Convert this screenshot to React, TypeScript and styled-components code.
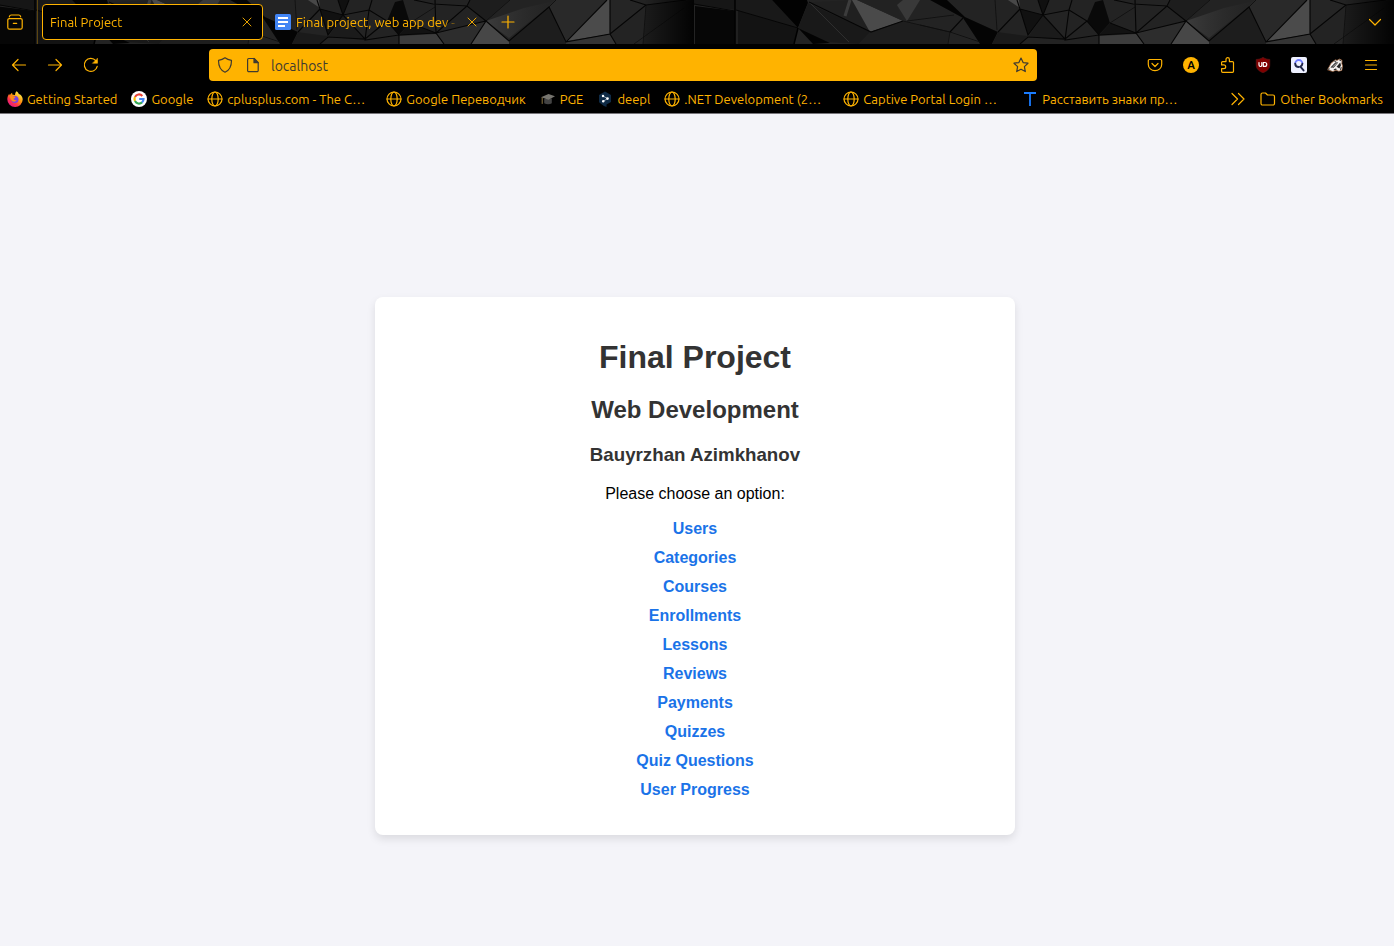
import React from 'react';
import styled, { createGlobalStyle, css } from 'styled-components';

const AMBER = '#ffb300';

const GlobalStyle = createGlobalStyle`
  *, *::before, *::after { box-sizing: border-box; }
  html, body { margin: 0; padding: 0; }
  body { background: #f4f4f9; font-family: Arial, "Liberation Sans", sans-serif; }
  button, input { font: inherit; color: inherit; margin: 0; padding: 0; border: 0; background: none; }
`;

const Chrome = styled.header`
  background: #000;
  color: ${AMBER};
  border-bottom: 1px solid #77757a;
  font-family: Ubuntu, "Noto Sans", sans-serif;
  font-size: 13px;
`;

/* Tab strip */
const TabStrip = styled.div`
  position: relative;
  height: 44px;
  display: flex;
  align-items: center;
  overflow: hidden;
`;

const ThemeArt = styled.svg`
  position: absolute;
  inset: 0;
  width: 100%;
  height: 44px;
`;

const StripContent = styled.div`
  position: relative;
  flex: 1;
  height: 100%;
  display: flex;
  align-items: center;
  padding: 0 3px 0 0;
`;

const ViewButton = styled.button`
  width: 38px;
  height: 44px;
  padding-left: 7px;
  display: flex;
  align-items: center;
  border-right: 1px solid #5c4510;
`;

const Tabs = styled.nav`
  display: flex;
  gap: 4px;
  padding-left: 4px;
`;

const Tab = styled.div<{ $active?: boolean }>`
  width: 221px;
  height: 36px;
  padding: 0 7px;
  display: flex;
  align-items: center;
  gap: 5px;
  border: 1px solid transparent;
  border-radius: 4px;
  ${p => p.$active && css`
    background: #000;
    border-color: ${AMBER};
  `}
`;

const TabTitle = styled.span`
  flex: 1;
  min-width: 0;
  overflow: hidden;
  white-space: nowrap;
  mask-image: linear-gradient(to left, transparent, #000 16px);
`;

const IconButton = styled.button<{ $size?: number }>`
  flex: none;
  width: ${p => p.$size ?? 36}px;
  height: ${p => Math.min(p.$size ?? 36, 36)}px;
  display: flex;
  align-items: center;
  justify-content: center;
`;

const Grow = styled.div`
  flex: 1;
`;

/* Navigation bar */
const NavBar = styled.div`
  height: 42px;
  display: flex;
  align-items: center;
  padding: 0 5px 0 1px;
`;

const Spring = styled.div`
  flex: 0 1 100px;
`;

const UrlBar = styled.form`
  flex: 1;
  min-width: 0;
  height: 32px;
  display: flex;
  align-items: center;
  padding: 0 8px;
  gap: 12px;
  border-radius: 4px;
  background: ${AMBER};
  color: #3f3a30;
`;

const SiteIcons = styled.div`
  display: flex;
  gap: 12px;
  margin-right: -2px;
`;

const UrlInput = styled.input`
  flex: 1;
  min-width: 0;
  height: 28px;
  padding-top: 2px;
  font-size: 14px;
  outline: none;
`;

/* Bookmarks bar */
const BookmarkBar = styled.nav`
  height: 27px;
  display: flex;
  align-items: center;
  gap: 14px;
  padding: 0 11px 2px 7px;
  white-space: nowrap;
`;

const Bookmark = styled.a`
  flex: none;
  display: flex;
  align-items: center;
  gap: 4px;
  color: ${AMBER};
  text-decoration: none;
`;

const BookmarkLabel = styled.span<{ $long?: boolean }>`
  ${p => p.$long && css`width: 145px;`}
`;

/* Page */
const Page = styled.main`
  padding: 183px 4px 111px 0;
`;

const Card = styled.section`
  width: 100%;
  max-width: 640px;
  margin: 0 auto;
  padding: 20px;
  display: flow-root;
  background: #fff;
  border-radius: 8px;
  box-shadow: 0 4px 8px rgba(0, 0, 0, 0.1);
  text-align: center;
`;

const Title = styled.h1`
  margin: 22px 0 20px;
  font-size: 32px;
  line-height: 37px;
  color: #333;
`;

const Subtitle = styled.h2`
  margin: 20px 0;
  font-size: 24px;
  line-height: 28px;
  color: #333;
`;

const Author = styled.h3`
  margin: 18px 0;
  line-height: 22px;
  color: #333;
`;

const Prompt = styled.p`
  margin: 16px 0;
  line-height: 19px;
  color: #000;
`;

const Menu = styled.ul`
  list-style: none;
  margin: 16px 0;
  padding: 0;
  display: grid;
  gap: 10px;
  line-height: 19px;
`;

const MenuLink = styled.a`
  color: #1a73e8;
  font-weight: bold;
  text-decoration: none;
`;

/* Icons */
const IconBase = styled.svg`
  flex: none;
  display: block;
`;

const Svg = ({ children }: { children: React.ReactNode }) => (
  <IconBase width="16" height="16" viewBox="0 0 16 16" fill="none" stroke="currentColor" strokeWidth="1.2" strokeLinecap="round" strokeLinejoin="round" aria-hidden="true">
    {children}
  </IconBase>
);

const GlobeIcon = () => (
  <Svg>
    <circle cx="8" cy="8" r="7" />
    <ellipse cx="8" cy="8" rx="3.2" ry="7" />
    <path d="M1 8h14" />
  </Svg>
);

const CloseIcon = () => (
  <Svg>
    <path d="M4 4l8 8M12 4l-8 8" strokeWidth="0.9" />
  </Svg>
);

const DocsIcon = () => (
  <Svg>
    <rect width="16" height="16" rx="1.5" fill="#4285f4" stroke="none" />
    <path d="M3 4h10M3 8h10M3 12h7" stroke="#fff" strokeWidth="1.8" strokeLinecap="butt" />
  </Svg>
);

const FirefoxViewIcon = () => (
  <Svg>
    <path d="M2.3 2.8C2.6 1.500 3.400 1 4.300 1h7.400c.9 0 1.700.5 2 1.800" />
    <path d="M2.300 4.600h11.400A1.500 1.500 0 0 1 15.200 6.100v7.300a1.800 1.800 0 0 1-1.800 1.800H2.600a1.800 1.800 0 0 1-1.800-1.800V6.100A1.500 1.500 0 0 1 2.300 4.600zM6.300 9.300h3.400" />
  </Svg>
);

const FirefoxIcon = () => (
  <Svg>
    <defs>
      <linearGradient id="fx" x1="0.85" y1="0.1" x2="0.2" y2="0.95">
        <stop offset="0" stopColor="#fff44f" />
        <stop offset="0.4" stopColor="#ff980e" />
        <stop offset="0.7" stopColor="#ff3647" />
        <stop offset="1" stopColor="#e31587" />
      </linearGradient>
    </defs>
    <path d="M9.6 0.3c1.4 1 2 2 2.3 3 .5-.1.8 0 1.2.3 1.600 1.200 2.600 2.900 2.600 5A7.600 7.600 0 0 1 8 16 7.700 7.700 0 0 1 .3 8.300c0-2.200.8-4 1.900-5.500.1.700.3 1.100.6 1.400C3.400 3 4.200 2.200 5.200 1.800c-.1.900.1 1.500.5 2 1 0 1.600.1 2.300.5 0-1.600.5-3 1.600-4z" fill="url(#fx)" stroke="none" />
    <circle cx="8" cy="8.6" r="3.5" fill="#7542e5" stroke="none" />
    <path d="M2.800 5.200c1.500-.8 3-.5 4 .4.700.2 1.400.2 1.700.7-.3 1-1.700.9-2 1.500.5 1.500 2 1.700 3.300 1.200-1 1.900-3.300 2.200-4.700.9C3.600 8.500 3.300 6.800 2.800 5.200z" fill="#ff8a16" stroke="none" />
  </Svg>
);

const GoogleIcon = () => (
  <Svg>
    <circle cx="8" cy="8" r="8" fill="#fff" stroke="none" />
    <g strokeWidth="2.2" strokeLinecap="butt">
      <path d="M11.300 4.900A4.500 4.500 0 0 0 4 5.900" stroke="#ea4335" />
      <path d="M4 5.900a4.500 4.500 0 0 0 0 4.200" stroke="#fbbc05" />
      <path d="M4 10.100a4.500 4.500 0 0 0 7 1.300" stroke="#34a853" />
      <path d="M11 11.400A4.500 4.500 0 0 0 12.500 8H8.200" stroke="#4285f4" strokeLinejoin="miter" />
    </g>
  </Svg>
);

const CapIcon = () => (
  <Svg>
    <path d="M4.200 8v4.200c2.300 1.500 5.600 1.500 7.600 0V7.500z" fill="#444" stroke="none" />
    <path d="M1 6.300L8.500 3 15 5.300 8.500 8.800z" fill="#77756f" stroke="none" />
    <path d="M2.200 7v5.500" stroke="#8b7440" strokeWidth="1" />
  </Svg>
);

const DeeplIcon = () => (
  <Svg>
    <path d="M8 0.500l6 3.400v7L9.500 13.600V16L7 14.900l-5-3.600V3.900z" fill="#0f2b46" stroke="none" />
    <path d="M6 5l4.500 2.600L6.300 10.200" stroke="#9fb0c0" strokeWidth="0.9" />
    <g fill="#fff" stroke="none">
      <circle cx="6" cy="5" r="1.2" />
      <circle cx="10.5" cy="7.6" r="1.3" />
      <circle cx="6.2" cy="10.2" r="1.2" />
    </g>
  </Svg>
);

const LetterTIcon = () => (
  <Svg>
    <path d="M2 2h12M8 2v13" stroke="#1a7cff" strokeWidth="1.8" strokeLinecap="butt" />
  </Svg>
);

const FolderIcon = () => (
  <Svg>
    <path d="M1 12.500V3.500A1.500 1.500 0 0 1 2.500 2h3L7.500 4h5.500A1.500 1.500 0 0 1 14.500 5.500v7A1.500 1.500 0 0 1 13 14H2.500A1.500 1.500 0 0 1 1 12.500z" />
  </Svg>
);

const BadgerIcon = () => (
  <Svg>
    <path d="M.6 12.500l1.600-2.700 2-3.800L6 4.800l2-2 2 .6L12.600 2l2.500 1.400-.3 3 .8 2.600-.8 4.400-3 .8-2.800-1-3 1.200z" fill="#f3f0ee" stroke="#a5673f" strokeWidth="0.7" />
    <path d="M3.400 10.600L8.600 5.200l2.600.4-4.600 5.200zM9.600 9.800l3.600-4.200.8 2.600-1.600 3.200zM6.400 12.600l2.400-1.200 1.200.9-2.200.9z" fill="#222" stroke="none" />
    <path d="M.8 12.300l1.600-.3M7 3.900l1.800.5M12.500 3l1.400.8M13.500 12.500l.6-2" stroke="#222" strokeWidth="0.9" />
    <path d="M5.800 9.800L9.400 6.400" stroke="#fff" strokeWidth="0.7" />
  </Svg>
);

type Shape = [points: string, fill: string];

const FACETS: Shape[] = [
  ['0,0 41,0 41,10 0,5', '#161616'],
  ['1,6 41,11 41,44 1,44', '#060606'],
  ['42,0 78,0 104,28 42,10', '#191919'],
  ['42,10 104,28 100,44 42,44', '#131313'],
  ['78,0 113,0 114,3 104,28', '#020202'],
  ['114,3 177,32 165,44 128,42 104,28', '#191919'],
  ['104,28 136,43 119,44', '#030303'],
  ['115,2 158,0 176,32', '#202020'],
  ['158,0 163,0 209,21 176,32', '#4a4a4a'],
  ['163,0 209,0 203,5 209,21', '#222222'],
  ['203,5 209,0 226,0 213,21', '#393939'],
  ['176,32 209,21 256,32 254,44 165,44', '#1e1e1e'],
  ['236,0 253,0 271,17 304,32 298,44 286,44 269,18', '#040404'],
  ['314,0 325,0 326,8', '#484848'],
  ['326,9 349,15 334,35', '#111111'],
  ['304,32 334,36 326,44 298,44', '#1a1a1a'],
  ['344,0 355,0 349,15', '#101010'],
  ['349,15 371,40 334,37', '#1b1b1b'],
  ['401,2 409,0 416,23 405,35 393,21', '#090909'],
  ['416,23 442,33 405,35', '#121212'],
  ['405,36 442,34 450,44 405,44', '#3c3c3c'],
  ['442,33 492,21 477,44 450,44', '#2d2d2d'],
  ['473,6 476,0 516,0 492,21', '#1d1d1d'],
  ['492,21 515,41 515,44 477,44', '#474747'],
  ['515,41 555,7 572,44 515,44', '#1d1d1d'],
  ['555,7 561,0 613,0 572,41', '#292929'],
  ['572,41 613,0 616,0 616,34', '#4b4b4b'],
  ['572,42 616,34 622,44 572,44', '#343434'],
  ['616,0 636,0 652,5 616,34', '#252525'],
  ['652,5 700,0 700,44 649,44', '#1b1b1b'],
];

const CREASES =
  'M0 4L41 11M42 10L104 28M115 2L177 32L209 21M269 18L256 32' +
  'M304 32L326 9L323 0M326 9L349 15L344 0M349 15L355 0M349 15L334 35L326 9M349 15L371 39L334 37L326 44M349 15L375 10L378 0' +
  'M375 10L371 40L405 35M375 10L393 21L371 39M393 21L405 35L442 33L416 23M405 35V44M420 0L439 4L473 6L476 0M441 0L442 33L473 6L492 21' +
  'M442 33L492 21L477 44M442 33L450 44M492 21L515 41L555 7L572 42L613 0M616 0V34L572 42M616 34L652 5L636 0M652 5L692 0M616 34L622 44';

const FINE_CREASES =
  'M209 21L256 32M213 21L260 15M256 32L226 25M256 32L254 44M256 32L286 42M301 0L303 30M416 23L441 7M492 21L516 0M555 7L562 0M652 5L649 44M640 44L690 8';

const CrystalPattern = () => (
  <ThemeArt aria-hidden="true">
    <defs>
      <linearGradient id="edge">
        <stop offset="0" stopColor="#000" stopOpacity="0" />
        <stop offset="1" stopColor="#000" stopOpacity="0.9" />
      </linearGradient>
      <linearGradient id="ridge">
        <stop offset="0" stopColor="#555" stopOpacity="0.5" />
        <stop offset="1" stopColor="#333" stopOpacity="0" />
      </linearGradient>
      <pattern id="crystal" x="694" width="700" height="44" patternUnits="userSpaceOnUse">
        <rect width="700" height="44" fill="#232323" />
        {FACETS.map(([points, fill]) => <polygon key={points} points={points} fill={fill} />)}
        <polygon points="492,21 530,8 565,0 550,10 515,38" fill="url(#ridge)" />
        <path d="M156 0L151 16" stroke="#3c3c3c" strokeWidth="3" />
        <path d="M115 2L155 42M43 10V44" stroke="#333" strokeWidth="0.8" fill="none" />
        <path d={FINE_CREASES} stroke="#0c0c0c" strokeWidth="0.8" fill="none" />
        <path d={CREASES} stroke="#050505" strokeWidth="1.2" fill="none" />
        <path d="M41 0V44M104 28L100 44" stroke="#000" strokeWidth="1.6" />
        <rect x="650" width="50" height="44" fill="url(#edge)" />
      </pattern>
    </defs>
    <rect width="100%" height="44" fill="url(#crystal)" />
  </ThemeArt>
);

const BOOKMARKS: { label: string; icon: React.ReactNode; long?: boolean }[] = [
  { label: 'Getting Started', icon: <FirefoxIcon /> },
  { label: 'Google', icon: <GoogleIcon /> },
  { label: 'cplusplus.com - The C…', icon: <GlobeIcon />, long: true },
  { label: 'Google Переводчик', icon: <GlobeIcon /> },
  { label: 'PGE', icon: <CapIcon /> },
  { label: 'deepl', icon: <DeeplIcon /> },
  { label: '.NET Development (2…', icon: <GlobeIcon />, long: true },
  { label: 'Captive Portal Login …', icon: <GlobeIcon />, long: true },
  { label: 'Расставить знаки пр…', icon: <LetterTIcon />, long: true },
];

const EXTENSIONS: { name: string; icon: React.ReactNode }[] = [
  {
    name: 'Save to Pocket',
    icon: <Svg><path d="M2.500 2.500h11a1.200 1.200 0 0 1 1.200 1.200V7.500a6.700 6.200 0 0 1-13.400 0V3.700a1.200 1.200 0 0 1 1.200-1.200zM5 6.500l3 3 3-3" /></Svg>,
  },
  {
    name: 'Account',
    icon: (
      <Svg>
        <circle cx="8" cy="8" r="8" fill={AMBER} stroke="none" />
        <text x="8" y="12" textAnchor="middle" fontSize="11" fontWeight="700" fill="#000" stroke="none">A</text>
      </Svg>
    ),
  },
  {
    name: 'Extensions',
    icon: <Svg><path d="M2.600 7.200V5.600a1 1 0 0 1 1-1H7V2.400a1.700 1.700 0 0 1 3.400 0v2.200h3.100a1 1 0 0 1 1 1v8.700a1 1 0 0 1-1 1H3.600a1 1 0 0 1-1-1v-2.600h2.200a1.900 1.900 0 0 0 0-3.800H2.600z" /></Svg>,
  },
  {
    name: 'uBlock Origin',
    icon: (
      <Svg>
        <path d="M8 .4c2 1.300 4.300 2 6.800 2V8c0 4-3 6.300-6.800 7.800C4.200 14.300 1.200 12 1.200 8V2.400c2.500 0 4.800-.7 6.800-2z" fill="#800000" stroke="#5a1a1a" strokeWidth="0.6" />
        <path d="M4 5.500v2.600a1.400 1.400 0 0 0 2.800 0V5.500M8.300 9.400V5.500h1.500a1.950 1.950 0 0 1 0 3.900z" stroke="#fff" strokeWidth="1.2" />
      </Svg>
    ),
  },
  {
    name: 'Search helper',
    icon: (
      <Svg>
        <rect width="16" height="16" rx="2" fill="#eef0ff" stroke="none" />
        <path d="M4.200 6.600a3.600 3.600 0 1 1 7.200 0" stroke="#6f7cff" strokeWidth="1.9" strokeLinecap="butt" />
        <path d="M4.200 6.600a3.600 3.600 0 0 0 3.600 3.400M11.400 6.600a3.600 3.600 0 0 1-2 3l3.200 3.800" stroke="#20264a" strokeWidth="1.9" />
      </Svg>
    ),
  },
  { name: 'Privacy Badger', icon: <BadgerIcon /> },
  { name: 'Open application menu', icon: <Svg><path d="M2.500 3.500h11M2.500 8h11M2.500 12.500h11" /></Svg> },
];

const LINKS = ['Users', 'Categories', 'Courses', 'Enrollments', 'Lessons', 'Reviews', 'Payments', 'Quizzes', 'Quiz Questions', 'User Progress'];

export default function App() {
  return (
    <>
      <GlobalStyle />
      <Chrome>
        <TabStrip>
          <CrystalPattern />
          <StripContent>
            <ViewButton aria-label="Firefox View"><FirefoxViewIcon /></ViewButton>
            <Tabs aria-label="Tabs">
              <Tab $active>
                <TabTitle>Final Project</TabTitle>
                <IconButton $size={16} aria-label="Close Final Project"><CloseIcon /></IconButton>
              </Tab>
              <Tab>
                <DocsIcon />
                <TabTitle>Final project, web app dev -</TabTitle>
                <IconButton $size={16} aria-label="Close Final project, web app dev"><CloseIcon /></IconButton>
              </Tab>
            </Tabs>
            <IconButton $size={40} aria-label="New tab"><Svg><path d="M8 2v12M2 8h12" /></Svg></IconButton>
            <Grow />
            <IconButton $size={32} aria-label="List all tabs"><Svg><path d="M2.500 5.500L8 11l5.500-5.500" /></Svg></IconButton>
          </StripContent>
        </TabStrip>
        <NavBar>
          <IconButton aria-label="Back"><Svg><path d="M14.500 8h-13M7 2.500L1.500 8 7 13.500" /></Svg></IconButton>
          <IconButton aria-label="Forward"><Svg><path d="M1.500 8h13M9 2.500L14.500 8 9 13.500" /></Svg></IconButton>
          <IconButton aria-label="Reload">
            <Svg>
              <path d="M14.200 9.300a6.500 6.500 0 1 1-1.400-5.600l1 1.200" />
              <path d="M14.500 1.500v4.800H9.700z" fill="currentColor" strokeWidth="0.5" />
            </Svg>
          </IconButton>
          <Spring />
          <UrlBar onSubmit={e => e.preventDefault()}>
            <SiteIcons>
              <Svg><path d="M8 .8c2 1.500 4.200 2.200 6.500 2.600C14.500 9 12.500 13.200 8 15.200 3.500 13.200 1.500 9 1.500 3.400 3.800 3 6 2.300 8 .8z" /></Svg>
              <Svg>
                <path d="M3.800 1.500h5.200l4.200 4.200v7.800a1.200 1.200 0 0 1-1.200 1.200H3.800a1.200 1.200 0 0 1-1.200-1.200V2.700a1.200 1.200 0 0 1 1.200-1.200z" />
                <path d="M9 1.500v4.200h4.200z" fill="currentColor" />
              </Svg>
            </SiteIcons>
            <UrlInput aria-label="Address" defaultValue="localhost" spellCheck={false} />
            <IconButton $size={16} type="button" aria-label="Bookmark this page">
              <Svg><path d="M8 1l2.100 4.600 4.900.6-3.600 3.400.9 5L8 12.200 3.700 14.600l.9-5L1 6.200l4.900-.6z" /></Svg>
            </IconButton>
          </UrlBar>
          <Spring />
          {EXTENSIONS.map(({ name, icon }) => <IconButton key={name} aria-label={name}>{icon}</IconButton>)}
        </NavBar>
        <BookmarkBar aria-label="Bookmarks">
          {BOOKMARKS.map(({ label, icon, long }) => (
            <Bookmark key={label} href="#">
              {icon}
              <BookmarkLabel $long={long}>{label}</BookmarkLabel>
            </Bookmark>
          ))}
          <Grow />
          <IconButton $size={16} aria-label="Show more bookmarks"><Svg><path d="M2 2.500L7.500 8 2 13.500M8.500 2.500L14 8l-5.500 5.500" /></Svg></IconButton>
          <Bookmark href="#">
            <FolderIcon />
            <BookmarkLabel>Other Bookmarks</BookmarkLabel>
          </Bookmark>
        </BookmarkBar>
      </Chrome>
      <Page>
        <Card>
          <Title>Final Project</Title>
          <Subtitle>Web Development</Subtitle>
          <Author>Bauyrzhan Azimkhanov</Author>
          <Prompt>Please choose an option:</Prompt>
          <Menu>
            {LINKS.map(link => (
              <li key={link}><MenuLink href="#">{link}</MenuLink></li>
            ))}
          </Menu>
        </Card>
      </Page>
    </>
  );
}
